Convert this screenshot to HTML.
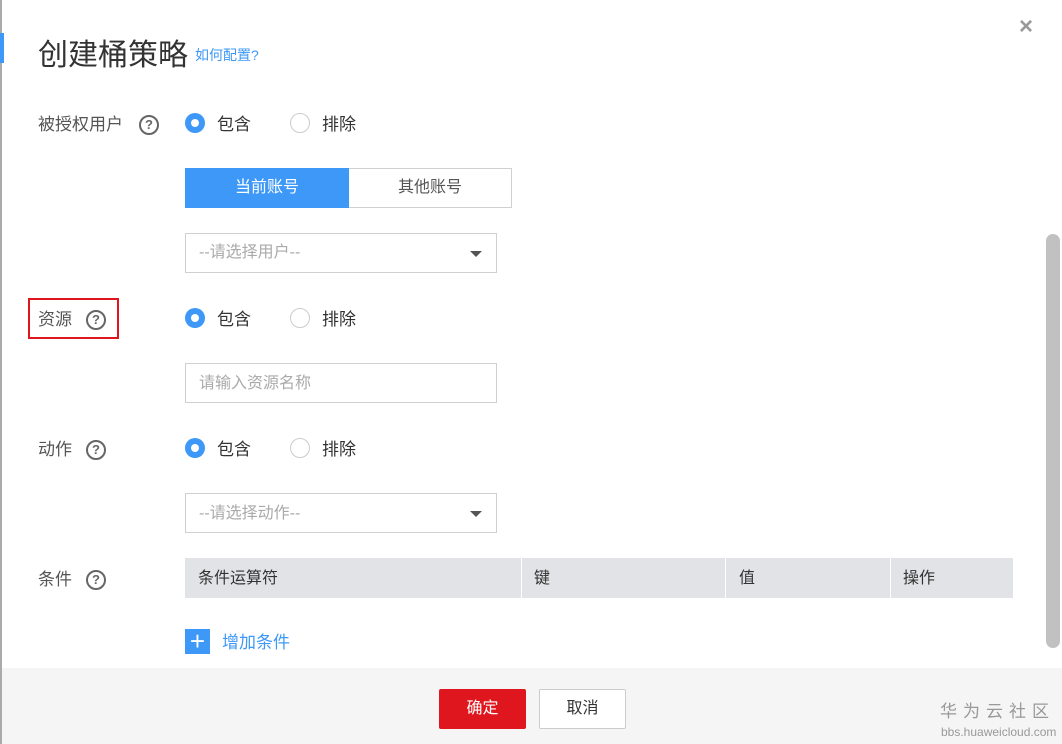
<!DOCTYPE html>
<html><head><meta charset="utf-8"><style>
*{box-sizing:border-box;margin:0;padding:0}
body{width:1062px;height:744px;overflow:hidden;background:#fff;font-family:"Liberation Sans","Noto Sans CJK SC",sans-serif;color:#333;position:relative}
.a{position:absolute}
.lbl{font-size:17px;color:#555}
.q{position:absolute;width:20px;height:20px;border:2px solid #666;border-radius:50%;font-size:13px;font-weight:bold;color:#666;text-align:center;line-height:16px}
.r{position:absolute;width:20px;height:20px;border-radius:50%}
.on{background:#3d98f7}.on::after{content:"";position:absolute;left:6px;top:6px;width:8px;height:8px;border-radius:50%;background:#fff}
.off{border:1px solid #ccc;background:#fff}
.t{font-size:17px;color:#333}
.inp{position:absolute;border:1px solid #d0d0d0;background:#fff;font-size:16px;color:#aaa;padding-left:13px;line-height:38px;height:40px}
.tri{position:absolute;right:14px;top:17px;border-left:6px solid transparent;border-right:6px solid transparent;border-top:6px solid #555}
</style></head><body>
<div class="a" style="left:0;top:0;width:2px;height:744px;background:#aaa"></div>
<div class="a" style="left:0;top:33px;width:4px;height:30px;background:#3d98f7"></div>
<div class="a" style="left:38px;top:30px;font-size:30px;color:#333">创建桶策略</div>
<div class="a" style="left:195px;top:45px;font-size:14px;color:#3d98f7">如何配置?</div>
<div class="a" style="left:1019px;top:13px;font-size:24px;font-weight:bold;color:#999">×</div>

<div class="a lbl" style="left:38px;top:110px">被授权用户</div>
<div class="q" style="left:139px;top:115px">?</div>
<div class="r on" style="left:185px;top:113px"></div><div class="a t" style="left:217px;top:110px">包含</div>
<div class="r off" style="left:290px;top:113px"></div><div class="a t" style="left:322px;top:110px">排除</div>

<div class="a" style="left:185px;top:168px;width:164px;height:40px;background:#3d98f7;color:#fff;font-size:16px;text-align:center;line-height:40px">当前账号</div>
<div class="a" style="left:349px;top:168px;width:163px;height:40px;border:1px solid #d0d0d0;border-left:none;color:#555;font-size:16px;text-align:center;line-height:38px">其他账号</div>

<div class="inp" style="left:185px;top:233px;width:312px">--请选择用户--<div class="tri"></div></div>

<div class="a" style="left:28px;top:298px;width:91px;height:41px;border:2px solid #e0161e"></div>
<div class="a lbl" style="left:38px;top:305px">资源</div>
<div class="q" style="left:86px;top:310px">?</div>
<div class="r on" style="left:185px;top:308px"></div><div class="a t" style="left:217px;top:305px">包含</div>
<div class="r off" style="left:290px;top:308px"></div><div class="a t" style="left:322px;top:305px">排除</div>

<div class="inp" style="left:185px;top:363px;width:312px;line-height:40px">请输入资源名称</div>

<div class="a lbl" style="left:38px;top:435px">动作</div>
<div class="q" style="left:86px;top:440px">?</div>
<div class="r on" style="left:185px;top:438px"></div><div class="a t" style="left:217px;top:435px">包含</div>
<div class="r off" style="left:290px;top:438px"></div><div class="a t" style="left:322px;top:435px">排除</div>

<div class="inp" style="left:185px;top:493px;width:312px;line-height:40px">--请选择动作--<div class="tri"></div></div>

<div class="a lbl" style="left:38px;top:565px">条件</div>
<div class="q" style="left:86px;top:570px">?</div>
<div class="a" style="left:185px;top:558px;width:828px;height:40px;background:#e1e3e6;font-size:16px;color:#333;line-height:42px">
<span class="a" style="left:13px">条件运算符</span>
<span class="a" style="left:336px;top:0;width:1px;height:40px;background:#fff"></span>
<span class="a" style="left:349px">键</span>
<span class="a" style="left:540px;top:0;width:1px;height:40px;background:#fff"></span>
<span class="a" style="left:554px">值</span>
<span class="a" style="left:705px;top:0;width:1px;height:40px;background:#fff"></span>
<span class="a" style="left:718px">操作</span>
</div>
<div class="a" style="left:185px;top:629px;width:25px;height:25px;background:#3d98f7;color:#fff;font-size:26px;line-height:24px;text-align:center">+</div>
<div class="a" style="left:222px;top:628px;font-size:17px;color:#3d98f7">增加条件</div>

<div class="a" style="left:1046px;top:234px;width:14px;height:414px;background:#c1c1c1;border-radius:7px"></div>

<div class="a" style="left:2px;top:668px;width:1060px;height:76px;background:#f5f5f5"></div>
<div class="a" style="left:439px;top:689px;width:87px;height:40px;background:#e0161e;color:#fff;font-size:16px;text-align:center;line-height:40px;border-radius:2px">确定</div>
<div class="a" style="left:539px;top:689px;width:87px;height:40px;background:#fff;border:1px solid #ccc;color:#333;font-size:16px;text-align:center;line-height:38px;border-radius:2px">取消</div>
<div class="a" style="left:940px;top:701px;font-size:17px;line-height:22px;color:#999;letter-spacing:6px">华为云社区</div>
<div class="a" style="left:941px;top:725px;font-size:12px;line-height:14px;color:#999">bbs.huaweicloud.com</div>
</body></html>
